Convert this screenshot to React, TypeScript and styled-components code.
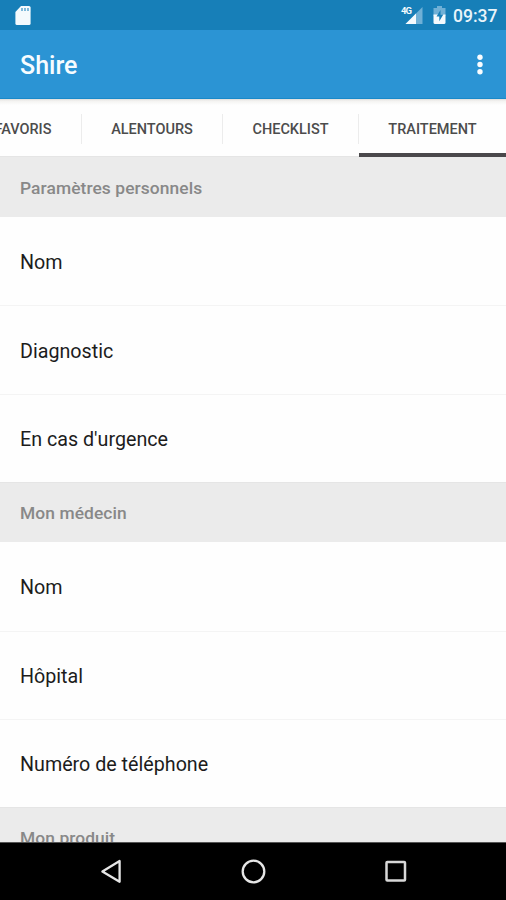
import React from 'react';
import styled, { createGlobalStyle } from 'styled-components';

const GlobalStyle = createGlobalStyle`
  * { box-sizing: border-box; }
  body { margin: 0; background: #fff; font-family: Roboto, "Liberation Sans", sans-serif; }
`;

const Screen = styled.div`
  width: 506px;
  height: 900px;
  display: flex;
  flex-direction: column;
  overflow: hidden;
  background: #fefefe;
`;

const StatusBar = styled.header`
  flex: 0 0 30px;
  display: flex;
  align-items: center;
  justify-content: space-between;
  padding: 0 9px 0 14px;
  background: #177fb8;
`;

const StatusIcons = styled.div`
  display: flex;
  align-items: center;
`;

const Clock = styled.span`
  margin-left: 7px;
  width: 44px;
  padding-top: 2px;
  color: #e9f4fa;
  font-size: 17.5px;
  font-weight: 500;
  line-height: 28px;
  white-space: nowrap;
`;

const AppBar = styled.div`
  flex: 0 0 69px;
  display: flex;
  align-items: center;
  justify-content: space-between;
  padding: 2px 22px 0 20px;
  background: #2b94d4;
  border-bottom: 1px solid #1989c9;
`;

const Title = styled.h1`
  margin: 0;
  padding-top: 1px;
  color: #f7fcff;
  font-size: 25px;
  font-weight: 500;
  line-height: 32px;
`;

const MenuButton = styled.button`
  display: flex;
  padding: 0;
  border: 0;
  background: none;
`;

const TabBar = styled.nav`
  flex: 0 0 57px;
  height: 57px;
  min-height: 0;
  z-index: 1;
  display: flex;
  justify-content: flex-end;
  background: linear-gradient(#dfdedb 0, #f4f3f1 2px, #fefefe 6px);
`;

const Tab = styled.button<{ $width: number; $active?: boolean }>`
  flex: 0 0 ${(p) => p.$width}px;
  height: ${(p) => (p.$active ? 58 : 57)}px;
  display: flex;
  align-items: center;
  justify-content: center;
  padding: ${(p) => (p.$active ? '8px 0 0' : '5px 0 0')};
  border: 0;
  border-bottom: ${(p) => (p.$active ? '4px solid #4a484b' : '0')};
  background: none;
  color: #4c4c4c;
  font: 500 14.5px/20px Roboto, "Liberation Sans", sans-serif;
  white-space: nowrap;
`;

const Separator = styled.span`
  flex: 0 0 1px;
  height: 30px;
  margin-top: 15px;
  background: #ececec;
`;

const List = styled.main`
  flex: 1 1 0;
  min-height: 0;
  overflow: hidden;
`;

const SectionHeader = styled.h2<{ $height: number }>`
  height: ${(p) => p.$height}px;
  margin: 0;
  padding: 2px 20px 0;
  display: flex;
  align-items: center;
  background: #ebebeb;
  border-top: 1px solid #e5e5e5;
  color: #888;
  font-size: 17.4px;
  font-weight: 500;
  letter-spacing: 0.08px;

  & ~ & { padding: 1px 20px 0; }
`;

const Row = styled.div`
  height: 88.4px;
  padding: 2px 20px 0;
  display: flex;
  align-items: center;
  color: #1c1c1c;
  font-size: 19.7px;
  & + & { border-top: 1px solid #f4f4f4; }
`;

const NavBar = styled.footer`
  flex: 0 0 58px;
  display: flex;
  justify-content: center;
  align-items: center;
  gap: 114px;
  background: #000;
  border-top: 1px solid #555;
`;

const sections = [
  { title: 'Paramètres personnels', height: 61, rows: ['Nom', 'Diagnostic', "En cas d'urgence"] },
  { title: 'Mon médecin', height: 60, rows: ['Nom', 'Hôpital', 'Numéro de téléphone'] },
  { title: 'Mon produit', height: 60, rows: [] },
];

export default function App() {
  return (
    <>
      <GlobalStyle />
      <Screen>
        <StatusBar>
          <svg width="18" height="22" viewBox="0 0 18 22">
            <path d="M7 2h8q1.6 0 1.6 1.6v15.8q0 1.6-1.6 1.6H3q-1.6 0-1.6-1.6V8z" fill="#f4fafd" />
            <path d="M8 4v3M11 4v3M14 4v3" stroke="#4d9dcb" strokeWidth="1.4" />
          </svg>
          <StatusIcons>
            <svg width="52" height="30" viewBox="0 0 52 30">
              <path d="M28.5 7v17H11.5z" fill="#6fb0d6" />
              <path d="M22 13.5v10.5H11.5z" fill="#f4fafd" />
              <text x="7" y="14" fill="#f4fafd" fontFamily="Roboto" fontSize="9.5" fontWeight="700" textLength="11">4G</text>
              <path d="M39.5 8h3.5V6h5v2h3.5v8h-12z" fill="#6fb0d6" />
              <path d="M39.5 14.5h12v8q0 1.5-1.5 1.5h-9q-1.5 0-1.5-1.5z" fill="#f4fafd" />
              <path d="M46.5 10l-4 6.6h2.8v4.6l4-6.7h-2.8z" fill="#177fb8" />
            </svg>
            <Clock>09:37</Clock>
          </StatusIcons>
        </StatusBar>
        <AppBar>
          <Title>Shire</Title>
          <MenuButton aria-label="Menu">
            <svg width="8" height="24" viewBox="0 0 8 24" fill="#fafdff">
              <circle cx="4" cy="4.2" r="2.7" />
              <circle cx="4" cy="11.5" r="2.7" />
              <circle cx="4" cy="18.8" r="2.7" />
            </svg>
          </MenuButton>
        </AppBar>
        <TabBar>
          <Tab $width={116}>FAVORIS</Tab>
          <Separator />
          <Tab $width={140}>ALENTOURS</Tab>
          <Separator />
          <Tab $width={135}>CHECKLIST</Tab>
          <Separator />
          <Tab $width={147} $active>TRAITEMENT</Tab>
        </TabBar>
        <List>
          {sections.map((s) => (
            <React.Fragment key={s.title}>
              <SectionHeader $height={s.height}>{s.title}</SectionHeader>
              {s.rows.map((r) => (
                <Row key={r}>{r}</Row>
              ))}
            </React.Fragment>
          ))}
        </List>
        <NavBar>
          <svg width="28" height="28" viewBox="0 0 28 28" fill="none" stroke="#e6e6e6" strokeWidth="2.3">
            <path d="M22.6 3v20.8L5.4 13.5z" strokeLinejoin="round" />
          </svg>
          <svg width="28" height="28" viewBox="0 0 28 28" fill="none" stroke="#e6e6e6" strokeWidth="2.3">
            <circle cx="14.5" cy="13.5" r="10.8" />
          </svg>
          <svg width="28" height="28" viewBox="0 0 28 28" fill="none" stroke="#d8d8d8" strokeWidth="2.5">
            <rect x="5.5" y="4" width="18.5" height="18.5" rx="0.8" />
          </svg>
        </NavBar>
      </Screen>
    </>
  );
}
